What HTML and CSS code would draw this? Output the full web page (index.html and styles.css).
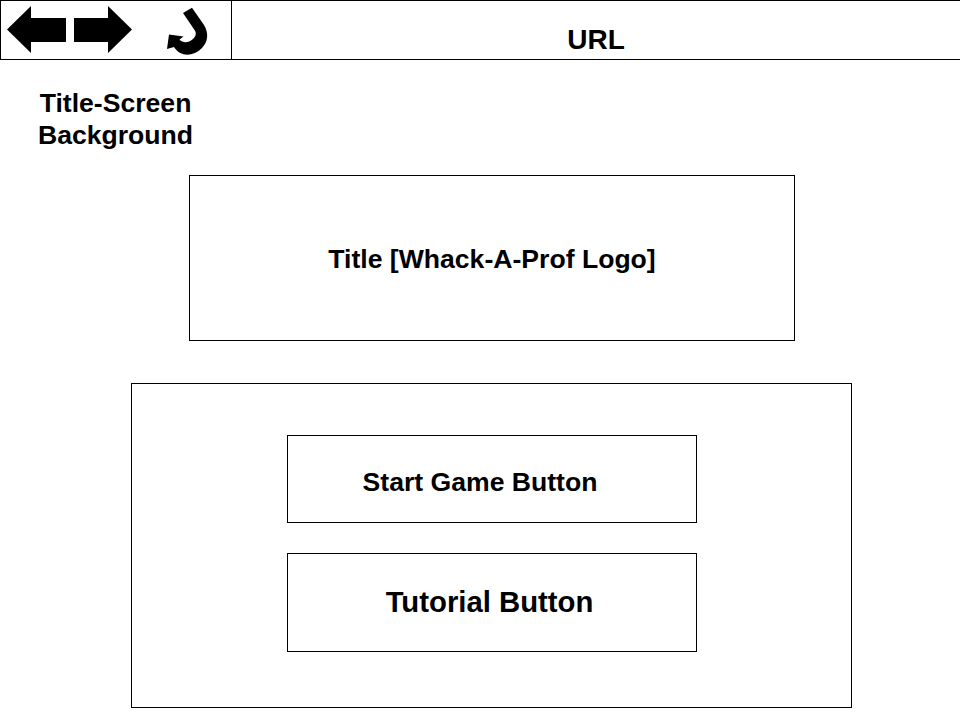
FILE: index.html
```
<!DOCTYPE html>
<html lang="en">
<head>
<meta charset="utf-8">
<title>Whack-A-Prof</title>
<link rel="stylesheet" href="styles.css">
</head>
<body>
<header class="browser-bar">
  <nav class="controls">
    <svg width="231" height="58" viewBox="1 1 231 58" aria-hidden="true">
      <path d="M7 29.5 31 6V18H66V42H31V53Z"/>
      <path d="M132 29.5 108 6V18H74V42H108V53Z"/>
      <path d="M183 13 192 7.700 204 25C209 33 208 42 202 48C193 57 180 57 174 47L167 49 169 34.500 183.500 36.500 179.500 39.500C182 42.500 187 43.300 191 40.500C196 37 197 33.500 194.500 30Z"/>
    </svg>
  </nav>
  <div class="url">URL</div>
</header>
<main>
  <p class="caption">Title-Screen<br>Background</p>
  <h1 class="logo">Title [Whack-A-Prof Logo]</h1>
  <section class="menu">
    <button class="start">Start Game Button</button>
    <button class="tutorial">Tutorial Button</button>
  </section>
</main>
</body>
</html>
```
FILE: styles.css
```
* { box-sizing: border-box; }
body {
  margin: 0;
  height: 720px;
  overflow: hidden;
  background: #fff;
  color: #000;
  font: bold 26.6px/32px "Liberation Sans", Arial, sans-serif;
}
.browser-bar {
  display: flex;
  height: 60px;
  border: 1px solid #000;
  border-right: 0;
}
.controls {
  width: 231px;
  border-right: 1px solid #000;
}
.controls svg { display: block; }
.url {
  flex: 1;
  padding-top: 23px;
  text-align: center;
  font-size: 28px;
}
main {
  display: flex;
  flex-direction: column;
}
.caption {
  width: 231px;
  margin: 27px 0 24px;
  text-align: center;
}
.logo {
  display: flex;
  align-items: center;
  justify-content: center;
  width: 606px;
  height: 166px;
  margin: 0 0 42px 189px;
  padding-top: 2px;
  border: 1px solid #000;
  font-size: inherit;
}
.menu {
  display: flex;
  flex-direction: column;
  gap: 30px;
  width: 721px;
  height: 325px;
  margin-left: 131px;
  padding: 51px 0 0 155px;
  border: 1px solid #000;
}
button {
  width: 410px;
  padding: 0;
  border: 1px solid #000;
  background: #fff;
  color: inherit;
  font: inherit;
}
.start {
  height: 88px;
  padding: 5px 24px 0 0;
}
.tutorial {
  height: 99px;
  padding: 0 5px 1px 0;
  font-size: 29.3px;
}
```
